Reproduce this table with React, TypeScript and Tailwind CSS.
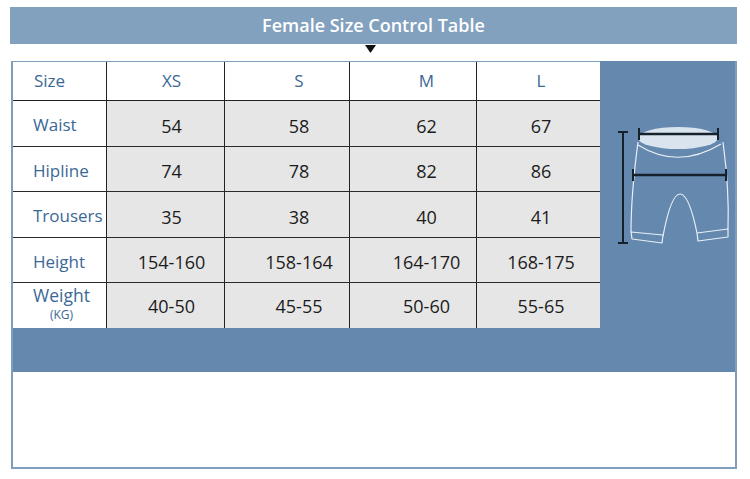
import React from "react"

const sizes = [
  { name: "XS", pad: "pl-[12px]" },
  { name: "S", pad: "pl-[24px]" },
  { name: "M", pad: "pl-[27px]" },
  { name: "L", pad: "pl-[5px]" },
]

const rows = [
  { label: "Waist", h: "h-[46px]", values: ["54", "58", "62", "67"] },
  { label: "Hipline", h: "h-[45px]", values: ["74", "78", "82", "86"] },
  { label: "Trousers", h: "h-[46px]", values: ["35", "38", "40", "41"] },
  { label: "Height", h: "h-[45px]", values: ["154-160", "158-164", "164-170", "168-175"] },
]

const cols = "grid grid-cols-[94px_118px_125px_127px_123px]"

function Shorts() {
  return (
    <svg width="135" height="266" viewBox="600 61 135 266" fill="none">
      <ellipse cx="678" cy="138" rx="40" ry="11" fill="#d9e4ee" />
      <g stroke="#e9eff6" strokeWidth="1.2" strokeLinejoin="round">
        <path d="M638,142 C634,172 631,205 631,232" />
        <path d="M723,142 C727,172 729,202 728,229" />
        <path d="M638,145 Q678,170 721,144" />
        <path d="M631,232 L663,235 L662,243 L632,239 Z" />
        <path d="M697,233 L728,229 L728,237 L698,241 Z" />
        <path d="M663,236 Q671,194 680,194 Q689,194 697,233" />
      </g>
      <g stroke="#17212c">
        <line x1="623" y1="132" x2="623" y2="243" strokeWidth="2" />
        <line x1="618" y1="132" x2="628" y2="132" strokeWidth="2" />
        <line x1="618" y1="243" x2="628" y2="243" strokeWidth="2" />
        <line x1="639" y1="134" x2="718" y2="134" strokeWidth="2.5" />
        <line x1="639" y1="128" x2="639" y2="140" strokeWidth="2" />
        <line x1="718" y1="128" x2="718" y2="140" strokeWidth="2" />
        <line x1="633" y1="175" x2="726" y2="175" strokeWidth="2.5" />
        <line x1="633" y1="169" x2="633" y2="181" strokeWidth="2" />
        <line x1="726" y1="169" x2="726" y2="181" strokeWidth="2" />
      </g>
    </svg>
  )
}

export default function App() {
  return (
    <div className="w-[750px] h-[479px] bg-white pt-[7px] font-['Open_Sans',sans-serif]">
      <div className="ml-[10px] w-[727px] h-[37px] bg-[#82a1be] flex items-center justify-center">
        <h1 className="text-[18px] font-semibold text-white">Female Size Control Table</h1>
      </div>
      <div className="h-[16px]">
        <svg className="ml-[365px] mt-[1px]" width="11" height="8" viewBox="0 0 11 8">
          <polygon points="0,0 11,0 5.5,8" fill="#111" />
        </svg>
      </div>

      <div className="ml-[11px] w-[726px] border-t border-x-2 border-b-2 border-[#7f9ebe]">
        <div className="flex">
          <div className="w-[587px]">
            <div className={`${cols} h-[39px] bg-white border-b border-[#222]`}>
              <div className="border-r border-[#222] flex items-center pl-[21px] text-[17px] text-[#3b6896]">
                Size
              </div>
              {sizes.map((s, i) => (
                <div
                  key={s.name}
                  className={`${i < 3 ? "border-r border-[#222]" : ""} flex items-center justify-center ${s.pad} text-[17px] text-[#3b6896]`}
                >
                  {s.name}
                </div>
              ))}
            </div>

            {rows.map((r) => (
              <div key={r.label} className={`${cols} ${r.h} border-b border-[#2a2a2a]`}>
                <div className="bg-white border-r border-[#222] flex items-center pl-[20px] pt-[3px] text-[17px] text-[#3b6896]">
                  {r.label}
                </div>
                {r.values.map((v, i) => (
                  <div
                    key={i}
                    className={`bg-[#e6e6e6] ${i < 3 ? "border-r border-[#222]" : ""} flex items-center justify-center pt-[5px] ${sizes[i].pad} text-[18px] text-[#1c1c1c]`}
                  >
                    {v}
                  </div>
                ))}
              </div>
            ))}

            <div className={`${cols} h-[45px]`}>
              <div className="bg-white border-r border-[#222] flex flex-col items-center pl-[4px] text-[#3b6896]">
                <span className="text-[17.5px] leading-[24px]">Weight</span>
                <span className="text-[12px] leading-[16px]">(KG)</span>
              </div>
              {["40-50", "45-55", "50-60", "55-65"].map((v, i) => (
                <div
                  key={i}
                  className={`bg-[#e6e6e6] ${i < 3 ? "border-r border-[#222]" : ""} flex items-center justify-center pt-[2px] ${sizes[i].pad} text-[18px] text-[#1c1c1c]`}
                >
                  {v}
                </div>
              ))}
            </div>
          </div>

          <div className="flex-1 bg-[#6488ae] -mt-px">
            <Shorts />
          </div>
        </div>

        <div className="h-[44px] bg-[#6488ae]" />
        <div className="h-[95px] bg-white" />
      </div>
    </div>
  )
}
